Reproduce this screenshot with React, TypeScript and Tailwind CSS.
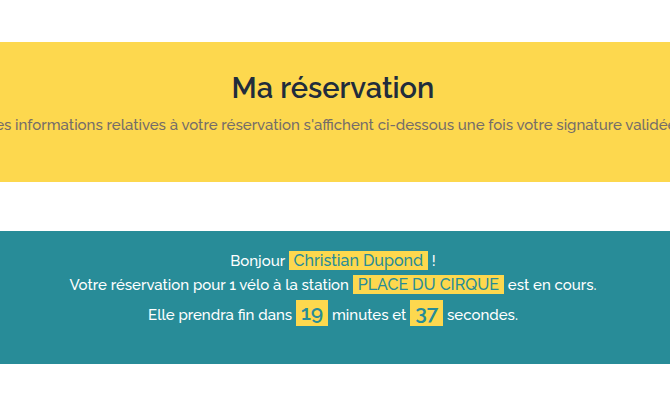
import type { ReactNode } from "react";

function Tag({ children }: { children: ReactNode }) {
  return (
    <span className="inline-block bg-[#fdd84e] px-[5px] text-base leading-[19px] font-medium text-[#288c98]">
      {children}
    </span>
  );
}

function Count({ children }: { children: ReactNode }) {
  return (
    <span className="inline-block bg-[#fdd84e] px-[5px] text-[21px] leading-[26px] font-semibold text-[#288c98]">
      {children}
    </span>
  );
}

export default function App() {
  return (
    <main className="overflow-hidden bg-white py-[42px] text-center font-[Raleway,Lato,sans-serif]">
      <header className="bg-[#fdd84e] pt-7 pr-1 pb-[45px]">
        <h1 className="text-[29px] leading-9 font-semibold text-[#212c3c]">Ma réservation</h1>
        <p className="mt-[7px] flex justify-center text-[15px] leading-6 font-medium whitespace-nowrap text-[#756d69]">
          Les informations relatives à votre réservation s'affichent ci-dessous une fois votre signature validée.
        </p>
      </header>
      <section className="mt-[49px] bg-[#288c98] pt-[18px] pr-1 pb-[35px] text-[15px] font-medium whitespace-nowrap text-white">
        <p className="leading-6">
          Bonjour <Tag>Christian Dupond</Tag> !
        </p>
        <p className="leading-6">
          Votre réservation pour 1 vélo à la station <Tag>PLACE DU CIRQUE</Tag> est en cours.
        </p>
        <p className="pt-[3px] leading-7">
          Elle prendra fin dans <Count>19</Count> minutes et <Count>37</Count> secondes.
        </p>
      </section>
    </main>
  );
}
